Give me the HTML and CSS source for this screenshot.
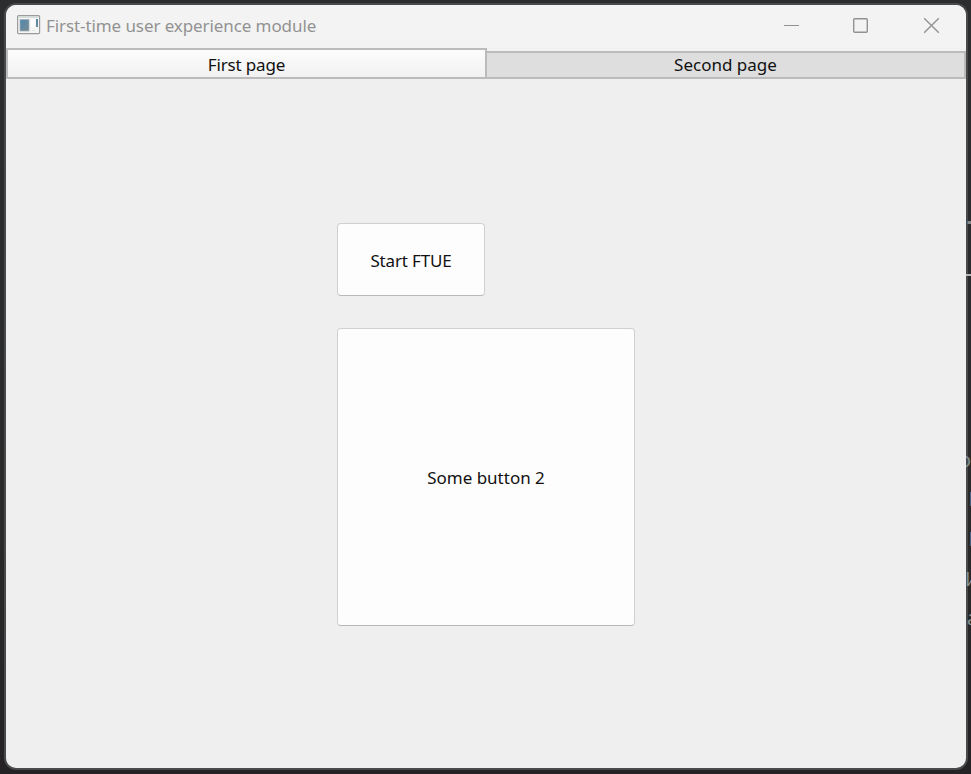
FILE: index.html
```html
<!DOCTYPE html>
<html lang="en">
<head>
<meta charset="utf-8">
<title>First-time user experience module</title>
<link rel="stylesheet" href="styles.css">
</head>
<body>
<main class="window">
  <header class="titlebar">
    <svg class="app-icon" width="24" height="20" viewBox="0 0 24 20">
      <defs><linearGradient id="pane" x1="0" y1="0" x2="1" y2="1"><stop offset="0" stop-color="#5088b0"/><stop offset="1" stop-color="#788c90"/></linearGradient></defs>
      <rect x=".6" y=".6" width="22" height="18" rx="1" fill="#f4f5f5" stroke="#9a9c9c" stroke-width="1.2"/>
      <path d="M1.2 2h20.6" stroke="#cfd8d6" stroke-width="1.6"/>
      <rect x="3" y="4.500" width="9" height="11.500" fill="url(#pane)" stroke="#a5b0b5" stroke-width=".7"/>
      <rect x="14" y="4" width="4" height="8" fill="#fff"/>
      <path d="M15 15.500h3" stroke="#dfe6e2"/>
      <rect x="19" y="4" width="2" height="8" fill="url(#pane)"/>
    </svg>
    <h1 class="title"><span>First-time user experience module</span></h1>
    <svg class="controls" width="158" height="18" viewBox="0 0 158 18" fill="none" stroke="#929292" stroke-width="1.4">
      <path d="M1 8.500h15" stroke-width="1"/>
      <rect x="70.700" y="1.700" width="13.600" height="13.600" rx="1"/>
      <path d="M141.200 1.200l14.600 14.600M155.800 1.200l-14.600 14.600"/>
    </svg>
  </header>
  <nav class="tabs">
    <button class="tab active"><span class="t-first">First page</span></button>
    <button class="tab"><span>Second page</span></button>
  </nav>
  <section class="page">
    <button class="push small"><span class="t-first">Start FTUE</span></button>
    <button class="push large"><span>Some button 2</span></button>
  </section>
</main>
<svg class="backdrop" width="5" height="774" viewBox="966 0 5 774">
  <path d="M967 222.500h4" stroke="#858a89" stroke-width="3"/>
  <path d="M967 222.500h1" stroke="#4b6c86" stroke-width="3"/>
  <path d="M966 275h5" stroke="#b5b8b6" stroke-width="2"/>
  <path d="M970.500 492v14M970.500 532v14" stroke="#426088"/>
  <g class="code">
    <text x="959.500" y="467">o</text>
    <text x="965" y="586">И</text>
    <text x="967" y="625">a</text>
  </g>
</svg>
</body>
</html>
```
FILE: styles.css
```css
* { box-sizing: border-box; }
body {
  margin: 0;
  width: 971px;
  height: 774px;
  padding: 3px 3px 4px 4px;
  overflow: hidden;
  background: linear-gradient(#2c2d2f, #29292a 70%, #242224);
  font-family: "Noto Sans", "Open Sans", sans-serif;
  font-size: 17px;
}
.window {
  width: 964px;
  height: 767px;
  border: 2px solid #48494a;
  border-radius: 12px;
  overflow: hidden;
  background: #efefef;
  display: flex;
  flex-direction: column;
}
.titlebar {
  height: 43px;
  flex: none;
  background: #f3f3f3;
  display: flex;
  align-items: flex-start;
  padding: 10px 25px 0 11px;
}
.app-icon { flex: none; }
.title {
  margin: -1px 0 0 5px;
  font-size: 17px;
  font-weight: 400;
  line-height: 24px;
  color: #929292;
  white-space: nowrap;
  letter-spacing: -0.09px;
}
.controls { margin: 2px 0 0 auto; flex: none; }
.tabs {
  height: 31px;
  flex: none;
  display: flex;
  align-items: flex-end;
  background: #f1f1f1;
}
.tab {
  flex: 1;
  height: 28px;
  border: 2px solid #bbb;
  border-left: 0;
  padding: 0;
  background: #dedede;
  font: inherit;
  line-height: 20px;
  color: #111;
  display: flex;
  align-items: center;
  justify-content: center;
}
.tab.active {
  flex: none;
  width: 481px;
  height: 31px;
  padding-top: 2px;
  border-left: 2px solid #bbb;
  background: linear-gradient(#fcfcfc, #f1f1f1);
}
.page {
  flex: 1;
  padding: 144px 0 0 331px;
  display: flex;
  flex-direction: column;
  gap: 32px;
}
.push {
  padding: 2px 0 0;
  border: 1px solid #d0d0d0;
  border-bottom-color: #b9b9b9;
  border-radius: 4px;
  background: #fdfdfd;
  color: #111;
  font: inherit;
}
.small { width: 148px; height: 73px; }
.large { width: 298px; height: 298px; padding-top: 0; }
.t-first { letter-spacing: -0.15px; }
.backdrop { position: absolute; left: 966px; top: 0; }
.code { font: 19px "Noto Sans", sans-serif; fill: #82908f; }
```
